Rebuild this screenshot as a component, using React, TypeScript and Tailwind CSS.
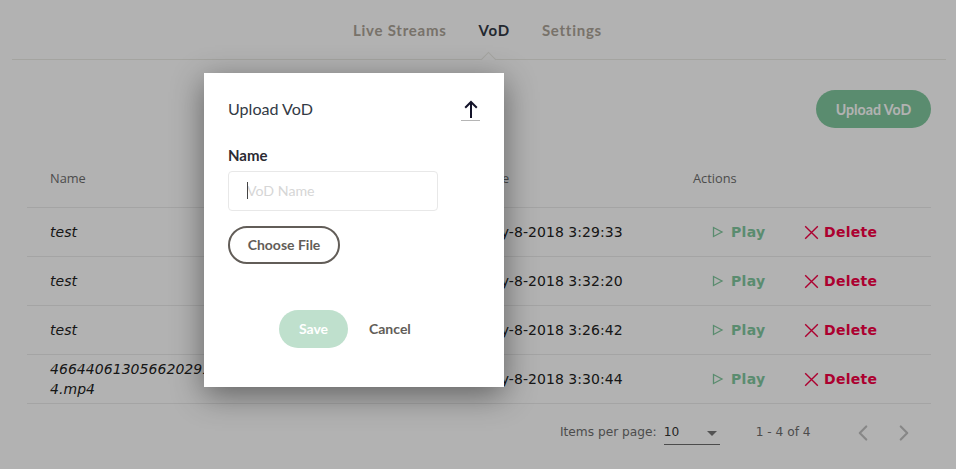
import { ChevronLeft, ChevronRight } from "lucide-react";

const rows = [
  { name: <>test</>, date: "May-8-2018 3:29:33" },
  { name: <>test</>, date: "May-8-2018 3:32:20" },
  { name: <>test</>, date: "May-8-2018 3:26:42" },
  { name: <>4664406130566202910<br />4.mp4</>, date: "May-8-2018 3:30:44" },
];

function Play() {
  return (
    <svg width="12" height="12" viewBox="0 0 12 12" fill="none" stroke="#82c99f" strokeWidth="1.3">
      <path d="M1.5 1.5 L10 6 L1.5 10.5 Z" />
    </svg>
  );
}

function Cross() {
  return (
    <svg width="15" height="15" viewBox="0 0 15 15" fill="none" stroke="#f70045" strokeWidth="1.4">
      <path d="M1.2 1.2 L13.8 13.8 M13.8 1.2 L1.2 13.8" />
    </svg>
  );
}

export default function App() {
  return (
    <div className="relative h-[469px] w-[956px] overflow-hidden bg-white font-['DejaVu_Sans',sans-serif]">
      <div className="relative ml-[12px] mr-[10px] flex h-[60px] items-center justify-center gap-[32px] border-b border-[#ebebe6] pr-[3px] pt-[2px] font-['Lato',sans-serif] text-[15px] font-bold tracking-[0.75px] text-[#aca498]">
        <span>Live Streams</span>
        <span className="text-[#333a45]">VoD</span>
        <span>Settings</span>
        <div className="absolute bottom-[-6px] left-[471px] h-[11px] w-[11px] rotate-45 border-l border-t border-[#ebebe6] bg-white" />
      </div>

      <div className="mr-[25px] flex justify-end pt-[30px]">
        <button className="h-[38px] w-[115px] rounded-full bg-[#82c99f] pt-[2px] font-['Lato',sans-serif] text-[14.2px] font-bold leading-[20px] text-white">Upload VoD</button>
      </div>

      <div className="ml-[27px] mr-[25px] mt-[12px] text-[14px] text-[#222]">
        <div className="grid h-[68px] grid-cols-[454px_212px_238px] items-center border-b border-[#ebebeb] pt-[11px] font-['Open_Sans',sans-serif] text-[12.8px] text-[#6e6e6e]">
          <span className="pl-[23px]">Name</span>
          <span>Date</span>
          <span>Actions</span>
        </div>
        {rows.map((r, i) => (
          <div key={i} className="grid h-[49px] grid-cols-[453px_213px_238px] items-center border-b border-[#ebebeb]">
            <span className="whitespace-nowrap pl-[23px] text-[14px] italic leading-[20px] tracking-[0.05px]">{r.name}</span>
            <span className="tracking-[0.05px]">{r.date}</span>
            <div className="flex items-center pl-[19px] text-[14px] font-bold tracking-[0.3px]">
              <span className="flex w-[92px] items-center gap-[7px] text-[#82c99f]"><Play />Play</span>
              <span className="flex items-center gap-[5px] text-[#f70045]"><Cross />Delete</span>
            </div>
          </div>
        ))}
        <div className="flex h-[57px] items-center text-[12.2px] text-[#6e6e6e]">
          <span className="ml-[533px]">Items per page:</span>
          <div className="relative ml-[7px] flex h-[24px] w-[56px] items-center border-b border-[#6e6e6e] text-[#333]">
            <span>10</span>
            <span className="absolute right-[3px] top-[10px] h-0 w-0 border-x-[5px] border-t-[5px] border-x-transparent border-t-[#777]" />
          </div>
          <span className="ml-[36px]">1 - 4 of 4</span>
          <ChevronLeft size={26} strokeWidth={2} className="ml-[39px] text-[#c2c2c2]" />
          <ChevronRight size={26} strokeWidth={2} className="ml-[15px] text-[#c2c2c2]" />
        </div>
      </div>

      <div className="absolute inset-0 bg-black/30" />

      <div className="absolute left-[204px] top-[73px] h-[314px] w-[300px] bg-white px-[24px] font-['Lato',sans-serif] shadow-[0_8px_30px_rgba(0,0,0,0.45)]">
        <div className="flex h-[73px] items-center justify-between pb-[1px]">
          <span className="text-[16.1px] leading-[24px] text-[#333a45]">Upload VoD</span>
          <div className="mt-[2px] flex w-[19px] flex-col items-center border-b border-[#b5b5b5] pb-[2px]">
            <svg width="14" height="18" viewBox="0 0 14 18" fill="none" stroke="#14142a" strokeWidth="2">
              <path d="M7 18 V2 M1.2 7.8 L7 2 L12.8 7.8" />
            </svg>
          </div>
        </div>
        <div className="-mt-[1px] text-[15px] font-bold leading-[20px] text-[#2b2b33]">Name</div>
        <div className="relative mt-[6px] h-[40px] w-[210px]">
          <input placeholder="VoD Name" className="h-full w-full rounded-[4px] border border-[#e8e8e8] pb-[2px] pl-[18px] text-[14.2px] outline-none placeholder:text-[#d6d6d6]" />
          <span className="absolute left-[19px] top-[11px] h-[17px] w-px bg-[#444]" />
        </div>
        <button className="mt-[15px] flex h-[38px] w-[112px] items-center justify-center rounded-full border-2 border-[#625d58] pb-[2px] text-[14px] font-bold text-[#625d58]">Choose File</button>
        <div className="mt-[46px] flex items-center">
          <button className="ml-[51px] h-[38px] w-[69px] rounded-full bg-[#bfe0cd] pb-[2px] text-[14px] font-bold text-white">Save</button>
          <span className="ml-[21px] pb-[2px] text-[14px] font-bold text-[#625d58]">Cancel</span>
        </div>
      </div>
    </div>
  );
}
